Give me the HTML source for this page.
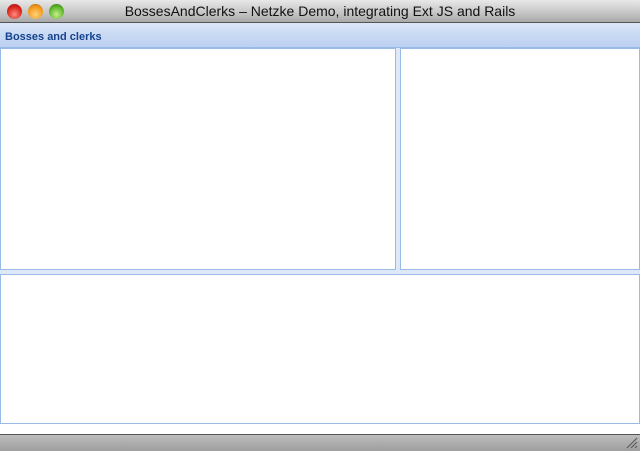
<!DOCTYPE html>
<html><head><style>
*{margin:0;padding:0;box-sizing:border-box}
body{width:640px;height:451px;overflow:hidden;background:#dfe8f6;font-family:"Liberation Sans",sans-serif;position:relative}
.tb{position:absolute;left:0;top:0;width:640px;height:23px;background:linear-gradient(#e8e8e8,#c4c4c4 60%,#a8a8a8);border-bottom:1px solid #555;text-align:center;font-size:14px;line-height:23px;color:#111}
.dot{position:absolute;top:4px;width:15px;height:15px;border-radius:50%}
.hd{position:absolute;left:0;top:23px;width:640px;height:25px;background:linear-gradient(#dbe6f7,#c9daf4 50%,#bcd0ef);border-bottom:1px solid #99bbe8;font-weight:bold;font-size:11px;color:#15428b;padding:8px 0 0 5px}
.p{position:absolute;background:#fff;border:1px solid #99bbe8}
.sb{position:absolute;left:0;top:434px;width:640px;height:17px;background:linear-gradient(#bdbdbd,#9e9e9e);border-top:1px solid #555}
.wh{position:absolute;left:0;top:424px;width:640px;height:10px;background:#fff}
</style></head><body>
<div class="tb">BossesAndClerks – Netzke Demo, integrating Ext JS and Rails
<div class="dot" style="left:7px;background:radial-gradient(circle at 50% 70%,#ff8a80,#d9221a 60%,#8b1510)"></div>
<div class="dot" style="left:28px;background:radial-gradient(circle at 50% 70%,#ffd27a,#f29a1c 60%,#a4600a)"></div>
<div class="dot" style="left:49px;background:radial-gradient(circle at 50% 70%,#c6f08a,#5cb52c 60%,#2d7010)"></div>
</div>
<div class="hd">Bosses and clerks</div>
<div class="p" style="left:0;top:48px;width:396px;height:222px"></div>
<div class="p" style="left:400px;top:48px;width:240px;height:222px"></div>
<div class="p" style="left:0;top:274px;width:640px;height:150px"></div>
<div class="wh"></div>
<div class="sb"><svg style="position:absolute;right:2px;bottom:2px" width="12" height="12"><path d="M11 1L1 11M11 5L5 11M11 9L9 11" stroke="#555" stroke-width="1"/></svg></div>
</body></html>
